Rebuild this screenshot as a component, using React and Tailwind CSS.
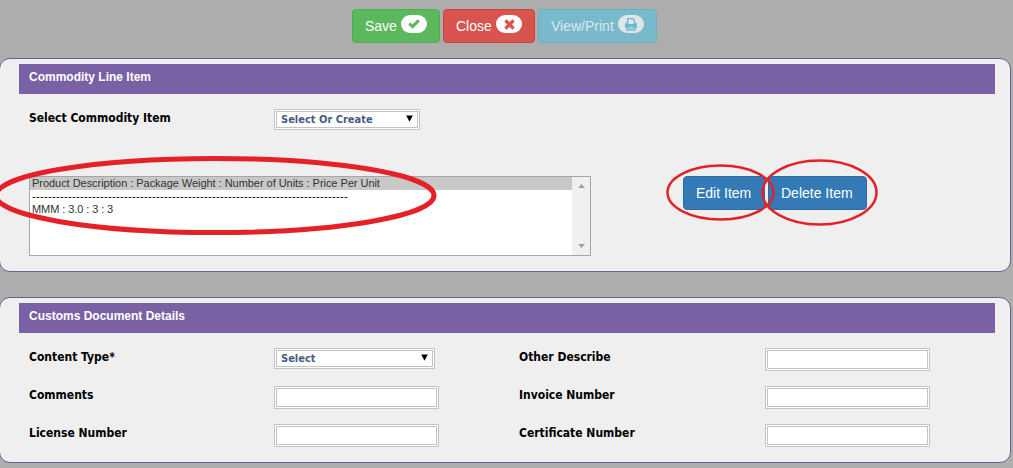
const label = "whitespace-nowrap font-['DejaVu_Sans_Condensed','DejaVu_Sans',sans-serif] text-[12px] leading-[18px] font-bold text-black [font-stretch:condensed]";
const field = "h-[23px] w-[165px] border-[3px] border-double border-[#c3c3c3] bg-white outline-none";

function CheckIcon() {
  return (
    <svg width="12" height="10" viewBox="0 0 12 10" className="block">
      <path d="M0.2 5.6 2.3 3.4 4.5 5.4 9.6 0.2 11.9 2.3 4.7 9.8Z" fill="#5cb85c" />
    </svg>
  );
}

function CrossIcon() {
  return (
    <svg width="11" height="11" viewBox="0 0 11 11" className="block">
      <path d="M2.6 0.3 5.5 3 8.4 0.3 10.7 2.6 8 5.5 10.7 8.4 8.4 10.7 5.5 8 2.6 10.7 0.3 8.4 3 5.5 0.3 2.6Z" fill="#d9534f" />
    </svg>
  );
}

function PrintIcon() {
  return (
    <svg width="14" height="13" viewBox="0 0 14 13" className="mt-px block">
      <path d="M3.7 6V.7h5l1.600 1.600V6" fill="none" stroke="#6cb9cd" strokeWidth="1.300" />
      <path d="M1 5.300 2.500 4v2h9V4L13 5.300V10h-1.700L10.700 8H3.300L2.700 10H1Z" fill="#6cb9cd" />
      <path d="M3.600 8.600h6.800l.8 3.500H2.800Z" fill="none" stroke="#6cb9cd" strokeWidth="1.200" />
      <path d="M3.500 10.300h7" stroke="#6cb9cd" strokeWidth="1" />
    </svg>
  );
}

function ActionButton({ className, width, text, children }) {
  return (
    <button className={`flex h-[34px] shrink-0 items-start rounded border pt-[6px] pl-3 text-left text-[14px] leading-[20px] ${className}`}>
      <span className={`${width} whitespace-nowrap`}>{text}</span>
      <span className="-mt-px flex h-[18px] w-[26px] items-center justify-center rounded-[10px] bg-white">{children}</span>
    </button>
  );
}

function Panel({ title, className, children }) {
  return (
    <section className={`-ml-px w-[1012px] rounded-[11px] border border-[#68628f] bg-[#efefef] pt-[5px] ${className}`}>
      <h2 className="ml-[19px] h-[30px] w-[976px] bg-[#7a61a5] pl-[10px] text-[12px] leading-[26px] font-bold text-white">{title}</h2>
      {children}
    </section>
  );
}

function Dropdown({ className, value }) {
  return (
    <div className={`flex items-center justify-between border-[3px] border-double border-[#c3c3c3] bg-white pr-[4px] pl-1 ${className}`}>
      <span className="whitespace-nowrap font-['DejaVu_Sans_Condensed','DejaVu_Sans',sans-serif] text-[11px] leading-[14px] font-bold text-[#475a85] [font-stretch:condensed]">{value}</span>
      <svg width="7" height="7" viewBox="0 0 7 7" className="-mt-[3px] block"><path d="M.2.5h6.6L3.5 6.8Z" fill="#000" /></svg>
    </div>
  );
}

const rows = [
  ["Content Type*", "Other Describe"],
  ["Comments", "Invoice Number"],
  ["License Number", "Certificate Number"],
];

export default function App() {
  return (
    <main className="relative h-[468px] w-[1013px] overflow-hidden bg-[#adadad] font-['Liberation_Sans',Arial,sans-serif]">
      <div className="flex h-[58px] gap-[3px] pt-[9px] pl-[352px]">
        <ActionButton className="w-[88px] border-[#4cae4c] bg-[#5cb85c] text-white" width="w-[36px]" text="Save"><CheckIcon /></ActionButton>
        <ActionButton className="w-[92px] border-[#c9433f] bg-[#d9534f] text-white" width="w-[40px]" text="Close"><CrossIcon /></ActionButton>
        <ActionButton className="w-[119px] border-[#6cb1c3] bg-[#78b9cc] text-[#d9e9ee] [&>span:last-child]:bg-[#dfe6e9]" width="w-[67px]" text="View/Print"><PrintIcon /></ActionButton>
      </div>

      <Panel title="Commodity Line Item" className="h-[214px]">
        <div className="flex h-[82px] items-start pt-[15px] pl-[29px]">
          <span className={`w-[245px] ${label}`}>Select Commodity Item</span>
          <Dropdown className="h-[21px] w-[146px]" value="Select Or Create" />
        </div>
        <div className="flex items-start pl-[29px]">
          <div className="flex h-[80px] w-[562px] border border-[#a6a6a6] bg-white text-[11px] leading-[13px] text-[#333]">
            <div className="min-w-0 grow whitespace-nowrap">
              <div className="h-[13px] bg-[#c8c8c8] pl-[2px] tracking-[-0.04px]">Product Description : Package Weight : Number of Units : Price Per Unit</div>
              <div className="h-[13px] overflow-hidden pl-[2px] tracking-[0.337px] text-black">{"-".repeat(79)}</div>
              <div className="h-[13px] pl-[2px] tracking-[-0.08px]">MMM : 3.0 : 3 : 3</div>
            </div>
            <div className="flex w-[18px] flex-col items-center justify-between bg-[#f0f0f0] py-[7px]">
              <svg width="7" height="4" viewBox="0 0 7 4"><path d="M0 4 3.5 0 7 4Z" fill="#a0a0a0" /></svg>
              <svg width="7" height="4" viewBox="0 0 7 4"><path d="M0 0h7L3.5 4Z" fill="#a0a0a0" /></svg>
            </div>
          </div>
          <div className="ml-[92px] flex gap-[3px] text-left text-[14px] text-white">
            <button className="h-[34px] w-[82px] rounded border border-[#2e6da4] bg-[#337ab7] pl-[12px] text-left whitespace-nowrap">Edit Item</button>
            <button className="h-[34px] w-[99px] rounded border border-[#2e6da4] bg-[#337ab7] pl-[12px] text-left whitespace-nowrap">Delete Item</button>
          </div>
        </div>
      </Panel>

      <Panel title="Customs Document Details" className="mt-[25px] h-[166px]">
        <div className="flex flex-col pt-[15px] pl-[29px]">
          {rows.map(([left, right], i) => (
            <div key={left} className="flex h-[38px] items-start">
              <span className={`w-[245px] ${label}`}>{left}</span>
              <div className="w-[245px]">
                {i === 0 ? <Dropdown className="h-[21px] w-[161px]" value="Select" /> : <input className={`block ${field}`} />}
              </div>
              <span className={`w-[246px] ${label}`}>{right}</span>
              <input className={`block ${field}`} />
            </div>
          ))}
        </div>
      </Panel>

      <svg width="1013" height="468" viewBox="0 0 1013 468" className="pointer-events-none absolute inset-0" fill="none" stroke="#e62027">
        <ellipse cx="215" cy="195.500" rx="219" ry="37" strokeWidth="5" />
        <ellipse cx="720.500" cy="192.500" rx="53" ry="27" strokeWidth="2.500" />
        <ellipse cx="819.500" cy="192.500" rx="57" ry="32" strokeWidth="2.500" />
      </svg>
    </main>
  );
}
